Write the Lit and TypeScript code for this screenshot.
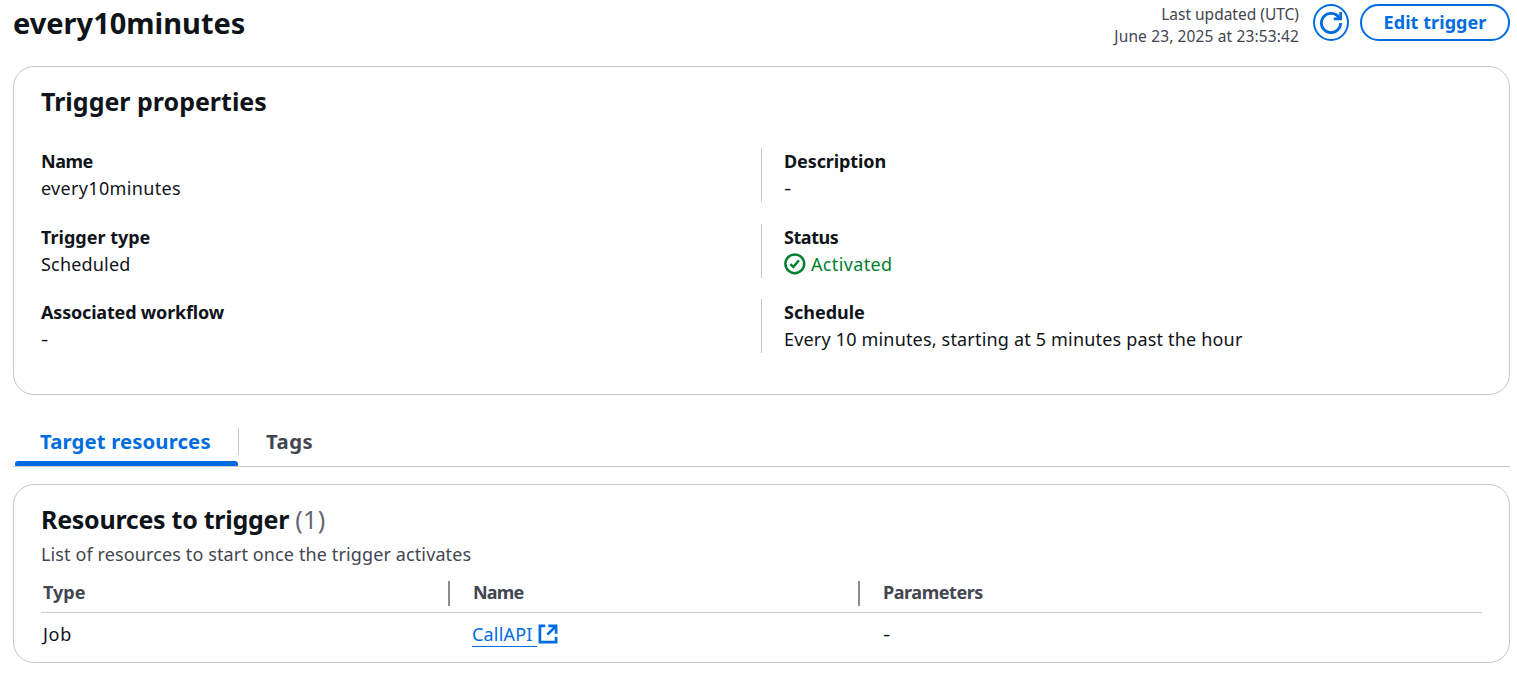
import { LitElement, html, css } from "lit";
import { customElement } from "lit/decorators.js";

@customElement("app-root")
export class AppRoot extends LitElement {
  static styles = css`
    :host {
      display: block;
      box-sizing: border-box;
      height: 678px;
      padding: 0 7px 0 13px;
      background: #fff;
      color: #0f141a;
      font-family: "Noto Sans", "Open Sans", sans-serif;
      font-size: 18px;
      line-height: 27px;
      white-space: nowrap;
      overflow: hidden;
    }
    * { box-sizing: border-box; margin: 0; }
    svg { display: block; fill: none; stroke: currentColor; }
    .header { display: flex; height: 66px; align-items: flex-start; }
    .title { flex: 1; font-size: 29px; line-height: 46px; font-weight: 700; }
    .updated { font-size: 15.5px; line-height: 22px; text-align: right; color: #424650; padding-top: 3px; }
    .stamp { letter-spacing: 0.13px; }
    .refresh {
      width: 36px; height: 37px; margin: 4px 11px 0 14px; padding: 0;
      border: 2px solid #006ce0; border-radius: 50%;
      background: #fff; color: #006ce0;
      display: flex; align-items: center; justify-content: center;
    }
    .edit {
      width: 150px; height: 37px; margin-top: 4px; padding: 0;
      border: 2px solid #006ce0; border-radius: 19px;
      background: #fff; color: #006ce0;
      font: 700 18px/33px "Noto Sans", sans-serif;
      letter-spacing: 0.06px;
    }
    .card { border: 1px solid #c6c6cd; border-radius: 21px; padding: 0 27px; }
    .props { height: 329px; }
    .heading { font-size: 25px; line-height: 34px; font-weight: 700; padding-top: 17px; }
    .tight { letter-spacing: -0.27px; }
    .count { font-weight: 400; color: #656871; letter-spacing: 0.3px; }
    .grid { display: grid; grid-template-columns: 720px 1fr; row-gap: 21.5px; padding-top: 30px; }
    .right { border-left: 1px solid #c6c6cd; padding-left: 22px; }
    .label { font-weight: 700; letter-spacing: -0.1px; }
    .label.narrow { letter-spacing: -0.45px; }
    .label.long { letter-spacing: -0.18px; }
    .label.kind { letter-spacing: 0; }
    .value { letter-spacing: 0.18px; }
    .value.wide { letter-spacing: 0.33px; }
    .dash { display: inline-block; transform: scaleX(1.25); transform-origin: 0 50%; }
    .status { display: flex; align-items: center; gap: 5px; color: #00802f; letter-spacing: 0.35px; }
    .tabs { display: flex; height: 72px; padding-top: 33px; border-bottom: 1px solid #c6c6cd; font-size: 20.3px; font-weight: 700; color: #424650; }
    .tab { display: flex; flex-direction: column; justify-content: space-between; }
    .tab.active { width: 223px; margin-left: 2px; color: #006ce0; }
    .tab.active .tabtext { padding-left: 25px; letter-spacing: 0.15px; }
    .tabbar { height: 5px; background: #006ce0; border-radius: 3px 3px 1px 1px; }
    .tab.other { height: 27px; border-left: 1px solid #c6c6cd; padding-left: 27px; letter-spacing: 0.5px; }
    .resources { height: 179px; margin-top: 17px; }
    .desc { color: #424650; padding-top: 5px; letter-spacing: 0.12px; }
    .row { display: grid; grid-template-columns: 407px 410px 1fr; }
    .thead { height: 45px; padding-top: 13px; border-bottom: 1px solid #c6c6cd; font-weight: 700; color: #424650; }
    .th { height: 25px; line-height: 23px; padding-left: 23px; border-left: 2px solid #8c8c94; letter-spacing: -0.45px; }
    .th.first { border: 0; padding-left: 2px; letter-spacing: 0; }
    .th.name { letter-spacing: -0.8px; }
    .tbody { padding-top: 8px; }
    .td { padding-left: 25px; }
    .td.first { padding-left: 2px; letter-spacing: 0.7px; }
    .linkcell { display: flex; padding-left: 24px; color: #006ce0; }
    .link { width: 65px; height: 26px; border-bottom: 1px solid #006ce0; color: inherit; text-decoration: none; letter-spacing: 0.2px; }
    .ext { margin: 3px 0 0 1px; }
  `;

  render() {
    return html`
      <header class="header">
        <h1 class="title">every10minutes</h1>
        <div class="updated">
          <div>Last updated (UTC)</div>
          <div class="stamp">June 23, 2025 at 23:53:42</div>
        </div>
        <button class="refresh" aria-label="Refresh">
          <svg width="22" height="22" viewBox="0 0 16 16" stroke-width="2">
            <path d="M10 5h5V0" />
            <path d="M15 8a6.957 6.957 0 0 1-7 7 6.957 6.957 0 0 1-7-7 6.957 6.957 0 0 1 7-7 6.87 6.87 0 0 1 6.3 4" />
          </svg>
        </button>
        <button class="edit">Edit trigger</button>
      </header>

      <section class="card props">
        <h2 class="heading">Trigger properties</h2>
        <div class="grid">
          <div><div class="label narrow">Name</div><div class="value wide">every10minutes</div></div>
          <div class="right"><div class="label">Description</div><div><span class="dash">-</span></div></div>
          <div><div class="label kind">Trigger type</div><div class="value">Scheduled</div></div>
          <div class="right">
            <div class="label narrow">Status</div>
            <div class="status">
              <svg width="22" height="22" viewBox="0 0 22 22" stroke-width="2.5">
                <circle cx="10.8" cy="10.8" r="9.4" />
                <path d="M6.3 11.1 9.3 14 14.9 7.4" />
              </svg>
              <span>Activated</span>
            </div>
          </div>
          <div><div class="label long">Associated workflow</div><div><span class="dash">-</span></div></div>
          <div class="right"><div class="label kind">Schedule</div><div class="value">Every 10 minutes, starting at 5 minutes past the hour</div></div>
        </div>
      </section>

      <nav class="tabs">
        <div class="tab active"><span class="tabtext">Target resources</span><div class="tabbar"></div></div>
        <div class="tab other"><span>Tags</span></div>
      </nav>

      <section class="card resources">
        <h2 class="heading tight">Resources to trigger <span class="count">(1)</span></h2>
        <div class="desc">List of resources to start once the trigger activates</div>
        <div class="row thead">
          <div class="th first">Type</div>
          <div class="th name">Name</div>
          <div class="th">Parameters</div>
        </div>
        <div class="row tbody">
          <div class="td first">Job</div>
          <div class="linkcell">
            <a class="link">CallAPI</a>
            <svg class="ext" width="20" height="20" viewBox="0 0 20 20" stroke-width="2.7">
              <path d="M7.3 1.9H1.9V18.1H18.1V12.7" />
              <path d="M10.3 1.9H18.1V9.7M18.1 1.9L9.4 10.6" />
            </svg>
          </div>
          <div class="td"><span class="dash">-</span></div>
        </div>
      </section>
    `;
  }
}
